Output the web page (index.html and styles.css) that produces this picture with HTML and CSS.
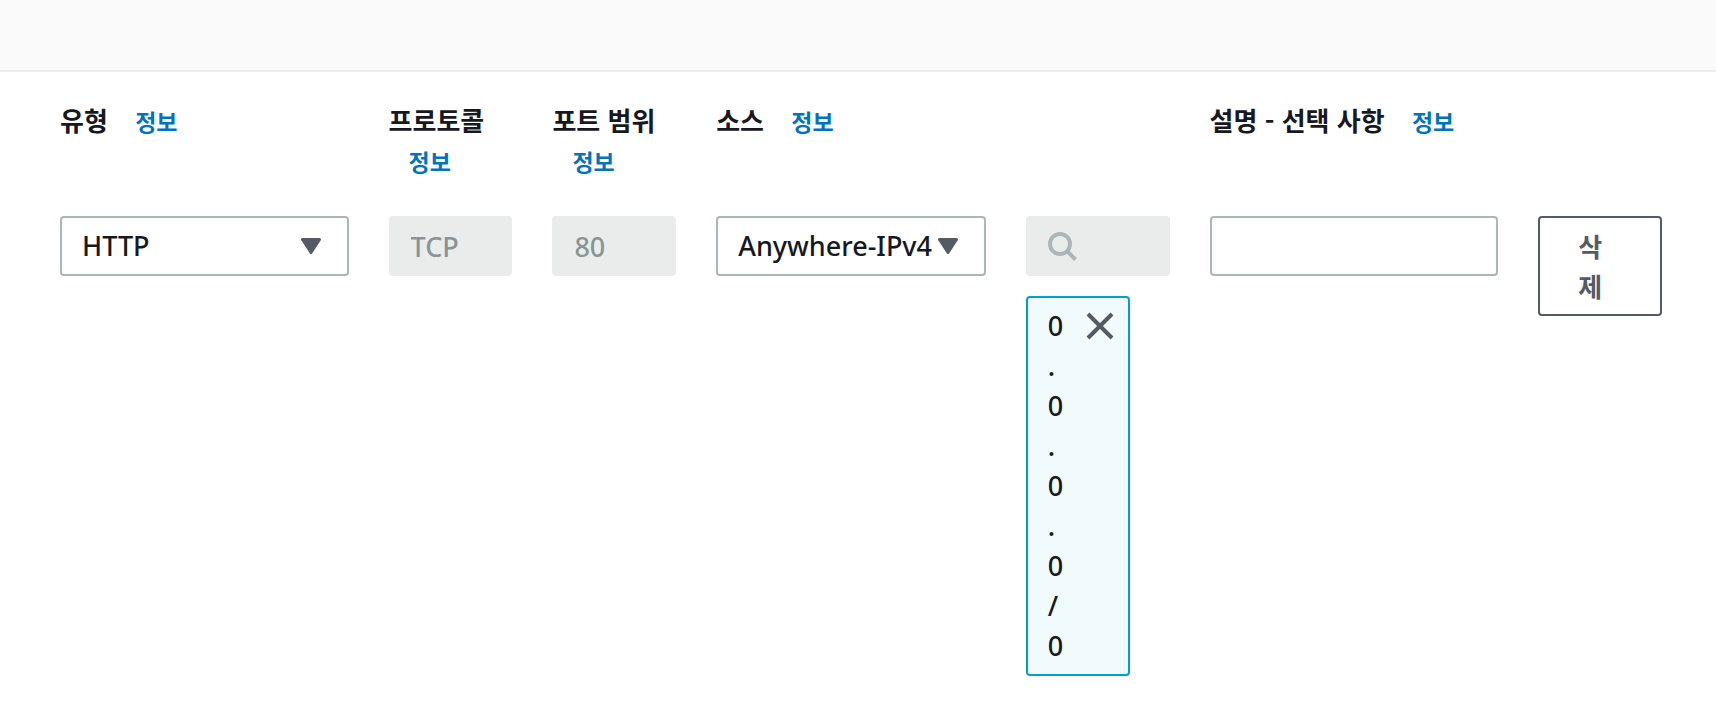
FILE: index.html
```
<!DOCTYPE html>
<html lang="ko">

<head>
  <meta charset="UTF-8" />
  <meta name="viewport" content="width=device-width, initial-scale=1.0" />
  <title>인바운드 규칙</title>
  <link rel="stylesheet" href="styles.css">
</head>

<body>
  <header class="panel-header"></header>

  <form class="rule">
    <!-- labels -->
    <div class="heading">
      <label for="type">유형</label>
      <a class="info" href="#type-info">정보</a>
    </div>
    <div class="heading">
      <label for="protocol">프로토콜</label>
      <a class="info" href="#protocol-info">정보</a>
    </div>
    <div class="heading">
      <label for="port">포트 범위</label>
      <a class="info" href="#port-info">정보</a>
    </div>
    <div class="heading heading-source">
      <label for="source">소스</label>
      <a class="info" href="#source-info">정보</a>
    </div>
    <div class="heading">
      <label for="description">설명 - 선택 사항</label>
      <a class="info" href="#description-info">정보</a>
    </div>
    <div class="heading"></div>

    <!-- controls -->
    <div class="select">
      <select class="control" id="type">
        <option>HTTP</option>
      </select>
      <svg class="arrow" width="20" height="16" viewBox="0 0 20 16" aria-hidden="true">
        <path d="M1.5 1.5h17L10 14.5z" />
      </svg>
    </div>
    <input class="control" id="protocol" type="text" value="TCP" disabled>
    <input class="control" id="port" type="text" value="80" disabled>
    <div class="select">
      <select class="control" id="source">
        <option>Anywhere-IPv4</option>
      </select>
      <svg class="arrow" width="20" height="16" viewBox="0 0 20 16" aria-hidden="true">
        <path d="M1.5 1.5h17L10 14.5z" />
      </svg>
    </div>
    <div class="source-values">
      <div class="search">
        <input class="control" type="search" aria-label="소스 검색" disabled>
        <svg class="search-icon" width="32" height="32" viewBox="0 0 32 32" aria-hidden="true">
          <circle cx="14" cy="14" r="10" />
          <path d="M21 21l8.5 8.5" />
        </svg>
      </div>
      <div class="token">
        <span class="token-text">0.0.0.0/0</span>
        <button class="token-remove" type="button" aria-label="제거">
          <svg width="28" height="28" viewBox="0 0 28 28" aria-hidden="true">
            <path d="M2 2l24 24M26 2L2 26" />
          </svg>
        </button>
      </div>
    </div>
    <input class="control" id="description" type="text">
    <button class="delete" type="button">삭제</button>
  </form>
</body>

</html>
```

FILE: styles.css
```
* {
  box-sizing: border-box;
}

body {
  margin: 0;
  background: #fff;
  color: #16191f;
  font-family: "Noto Sans", "Noto Sans CJK KR", sans-serif;
  font-size: 27px;
  font-weight: 500;
  line-height: 40px;
}

.panel-header {
  height: 72px;
  background: #fafafa;
  border-bottom: 2px solid #eaeded;
}

.rule {
  display: grid;
  grid-template-columns: 289fr 124fr 124fr 270fr 144fr 289fr 124fr;
  gap: 35px 40px;
  align-items: start;
  padding: 28px 54px 44px 60px;
}

.heading {
  font-family: "Noto Sans CJK KR", sans-serif;
  font-size: 26px;
  font-weight: 700;
}

.heading-source {
  grid-column: span 2;
}

.info {
  display: inline-block;
  margin-left: 20px;
  color: #0073bb;
  font-size: 23px;
  text-decoration: none;
}

.info:hover {
  text-decoration: underline;
}

.control {
  width: 100%;
  min-width: 0;
  height: 60px;
  margin: 0;
  padding: 0 20px;
  border: 2px solid #aab7b8;
  border-radius: 4px;
  background: #fff;
  color: #16191f;
  font: inherit;
  line-height: 40px;
  appearance: none;
}

.control:disabled {
  border-color: #eaeceb;
  background: #eaeceb;
  color: #879596;
  opacity: 1;
}

/* icon shares the cell with its control */
.select,
.search {
  display: grid;
  align-items: center;
}

.select > *,
.search > * {
  grid-area: 1 / 1;
}

.arrow {
  justify-self: end;
  margin-right: 28px;
  fill: #545b64;
  stroke: #545b64;
  stroke-width: 3;
  stroke-linejoin: round;
  pointer-events: none;
}

.search-icon {
  margin-left: 20px;
  fill: none;
  stroke: #aab7b8;
  stroke-width: 4;
  pointer-events: none;
}

.source-values {
  display: grid;
  gap: 20px;
  justify-items: start;
}

.token {
  display: flex;
  align-items: flex-start;
  gap: 16px;
  padding: 8px 14px 8px 20px;
  border: 2px solid #00a1c9;
  border-radius: 4px;
  background: #f1fafd;
}

.token-text {
  width: 22px;
  line-break: anywhere;
}

.token-remove {
  display: flex;
  align-items: center;
  height: 40px;
  padding: 0;
  border: 0;
  background: none;
  cursor: pointer;
}

.token-remove svg {
  fill: none;
  stroke: #545b64;
  stroke-width: 4;
}

.delete {
  padding: 8px 38px;
  border: 2px solid #545b64;
  border-radius: 4px;
  background: #fff;
  color: #545b64;
  font-family: "Noto Sans CJK KR", sans-serif;
  font-size: 26px;
  font-weight: 700;
  line-height: 40px;
  text-align: left;
  cursor: pointer;
}
```
